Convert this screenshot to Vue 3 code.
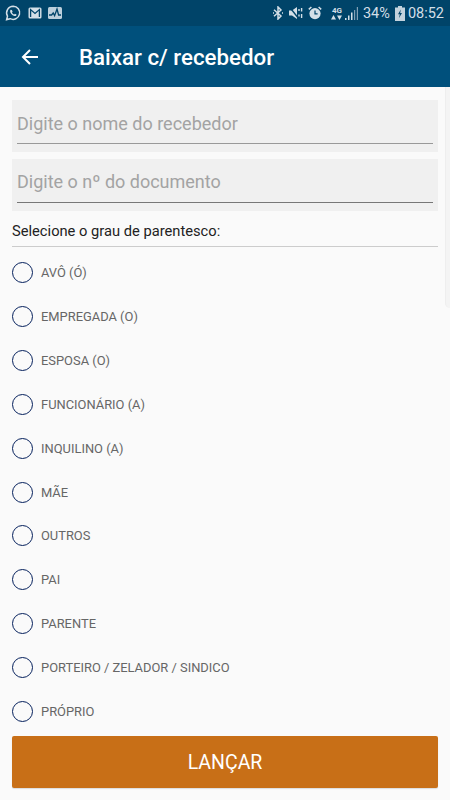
<template>
  <div class="screen">
    <div class="status-bar">
      <div class="status-left">
        <svg class="ico" width="18" height="18" viewBox="0 0 18 18">
          <path d="M9.2 2.2a6.6 6.6 0 0 0-5.7 9.9L2.6 15.6l3.5-.9A6.6 6.6 0 1 0 9.2 2.2z" fill="none" stroke="#d3dfe7" stroke-width="1.5" />
          <path d="M6.7 5.8c-.7.7-.8 1.7-.2 2.9.7 1.4 1.8 2.5 3.2 3.1 1.1.5 2 .3 2.6-.4l.2-.9-1.6-.8-.7.8c-.9-.3-1.7-1.1-2.2-2.1l.6-.7-.7-1.7z" fill="#d3dfe7" />
        </svg>
        <svg class="ico" width="14" height="12" viewBox="0 0 14 12">
          <rect x="0.5" y="0.5" width="13" height="11" rx="1.5" fill="#d3dfe7" />
          <path d="M2.6 10V2.6L7 6.4l4.4-3.8V10" fill="none" stroke="#004469" stroke-width="1.3" />
        </svg>
        <svg class="ico" width="14" height="12" viewBox="0 0 14 12">
          <rect x="0" y="0" width="14" height="12" rx="1.5" fill="#bccfdb" />
          <path d="M1 8h2.6l1.6-2 1.4 2.6L9 2l1.6 6H13" fill="none" stroke="#004469" stroke-width="1.3" />
        </svg>
      </div>
      <div class="status-right">
        <svg class="ico bt" width="10" height="14" viewBox="0 0 10 14">
          <path d="M1 3.8l7 6.2L5 13V1l3 3-7 6.2" fill="none" stroke="#d3dfe7" stroke-width="1.5" />
          <path d="M0 7h1M9 7h1" stroke="#d3dfe7" stroke-width="1.4" />
        </svg>
        <svg class="ico mute" width="14" height="14" viewBox="0 0 14 14">
          <path d="M0 4.5h3L8 1v12L3 9.5H0z" fill="#d3dfe7" />
          <path d="M0.5 1l9.5 12" stroke="#004469" stroke-width="1.3" />
          <path d="M10 3v2M12.6 2v3.4M10 8.5v2M12.6 8v4" stroke="#d3dfe7" stroke-width="1.4" />
        </svg>
        <svg class="ico alarm" width="14" height="14" viewBox="0 0 14 14">
          <circle cx="7" cy="7.6" r="5.6" fill="#d3dfe7" />
          <path d="M7 4.4v3.4h2.6" fill="none" stroke="#004469" stroke-width="1.2" />
          <path d="M0.8 3.4L3.4 1M13.2 3.4L10.6 1" stroke="#d3dfe7" stroke-width="1.5" />
        </svg>
        <div class="net">
          <span class="net-label">4G</span>
          <svg width="11" height="5" viewBox="0 0 11 5">
            <path d="M2.5 0L5 4.5H0zM8.5 5L6 .5h5z" fill="#d3dfe7" />
          </svg>
        </div>
        <svg class="ico signal" width="13" height="13" viewBox="0 0 13 13">
          <path d="M0 13v-2h1.5v2zM3 13V8.5h1.5V13zM6 13V5.5h1.5V13z" fill="#d3dfe7" />
          <path d="M9 13V3h1.2v10zM11.8 13V0H13v13z" fill="#7f9fb4" />
        </svg>
        <span class="pct">34%</span>
        <svg class="ico battery" width="10" height="15" viewBox="0 0 10 15">
          <path d="M3 0h4v1.5h3V15H0V1.5h3z" fill="#c3d3dd" />
          <path d="M5.8 3.5L3 8.2h1.8L4 12l3-5H5.2z" fill="#004469" />
        </svg>
        <span class="clock">08:52</span>
      </div>
    </div>

    <header class="app-bar">
      <svg class="back" width="18" height="18" viewBox="0 0 18 18">
        <path d="M17 9H2M9 2L2 9l7 7" fill="none" stroke="#fff" stroke-width="2" />
      </svg>
      <h1 class="title">Baixar c/ recebedor</h1>
    </header>

    <main class="content">
      <div class="field">
        <div class="field-text">Digite o nome do recebedor</div>
      </div>
      <div class="field second">
        <div class="field-text dark">Digite o nº do documento</div>
      </div>
      <div class="group-label">Selecione o grau de parentesco:</div>
      <ul class="options">
        <li v-for="item in options" :key="item" class="option">
          <span class="radio"></span>
          <span class="option-text">{{ item }}</span>
        </li>
      </ul>
      <button class="submit" type="button">LANÇAR</button>
    </main>

    <div class="scroll-hint"></div>
  </div>
</template>

<script setup>
const options = [
  'AVÔ (Ó)',
  'EMPREGADA (O)',
  'ESPOSA (O)',
  'FUNCIONÁRIO (A)',
  'INQUILINO (A)',
  'MÃE',
  'OUTROS',
  'PAI',
  'PARENTE',
  'PORTEIRO / ZELADOR / SINDICO',
  'PRÓPRIO'
]
</script>

<style>
html,
body {
  margin: 0;
  padding: 0;
}
</style>

<style scoped>
.screen {
  position: relative;
  width: 450px;
  height: 800px;
  display: flex;
  flex-direction: column;
  overflow: hidden;
  background: #fafafa;
  font-family: Roboto, "Liberation Sans", sans-serif;
}

.status-bar {
  height: 26px;
  flex-shrink: 0;
  padding: 0 6px 0 4px;
  display: flex;
  justify-content: space-between;
  align-items: center;
  background: #004469;
  color: #d3dfe7;
}

.status-left,
.status-right {
  display: flex;
  align-items: center;
}

.status-left {
  gap: 6px;
}

.ico {
  display: block;
}

.mute {
  margin-left: 6px;
}

.alarm {
  margin-left: 5px;
}

.net {
  display: flex;
  flex-direction: column;
  align-items: center;
  margin-left: 9px;
  width: 12px;
}

.net-label {
  font-size: 8px;
  line-height: 8px;
  font-weight: 700;
}

.signal {
  margin-left: 2px;
}

.pct,
.clock {
  font-size: 14.5px;
}

.pct {
  margin-left: 5px;
}

.battery {
  margin-left: 5px;
}

.clock {
  margin-left: 3px;
}

.app-bar {
  height: 61px;
  flex-shrink: 0;
  display: flex;
  align-items: center;
  background: #00507c;
  color: #fff;
}

.back {
  margin-left: 21px;
}

.title {
  margin: 0 0 0 40px;
  font-size: 22.3px;
  font-weight: 500;
}

.content {
  flex: 1;
  min-height: 0;
  padding: 13px 12px 12px;
  display: flex;
  flex-direction: column;
}

.field {
  height: 52px;
  flex-shrink: 0;
  padding: 0 5px 8px 5px;
  box-sizing: border-box;
  display: flex;
  background: #f0f0f0;
}

.second {
  margin-top: 7px;
}

.field-text {
  flex: 1;
  display: flex;
  align-items: center;
  padding-top: 3px;
  font-size: 18px;
  color: #a3a3a3;
  border-bottom: 1.5px solid #999;
}

.field-text.dark {
  padding-top: 1px;
  border-bottom-color: #777;
}

.group-label {
  margin-top: 10px;
  padding-bottom: 5px;
  font-size: 14.7px;
  line-height: 20px;
  color: #222;
  border-bottom: 1px solid #ccc;
}

.options {
  flex: 1;
  min-height: 0;
  margin: 4px 0 0;
  padding: 0;
  list-style: none;
}

.option {
  height: 43.85px;
  display: flex;
  align-items: center;
  gap: 8px;
}

.radio {
  width: 19px;
  height: 19px;
  border: 1.2px solid #05205c;
  border-radius: 50%;
}

.option-text {
  font-size: 12.9px;
  color: #666;
}

.submit {
  height: 52px;
  flex-shrink: 0;
  border: none;
  border-radius: 2px;
  background: #c86f17;
  color: #fff;
  font-family: inherit;
  font-size: 19.5px;
  box-shadow: 0 1px 1px rgba(0, 0, 0, 0.12);
}

/* barra de rolagem sobre o conteudo */
.scroll-hint {
  position: absolute;
  top: 87px;
  right: 0;
  width: 4px;
  height: 221px;
  background: #f4f4f4;
  border-left: 1px solid #eee;
  border-bottom-left-radius: 5px;
}
</style>
